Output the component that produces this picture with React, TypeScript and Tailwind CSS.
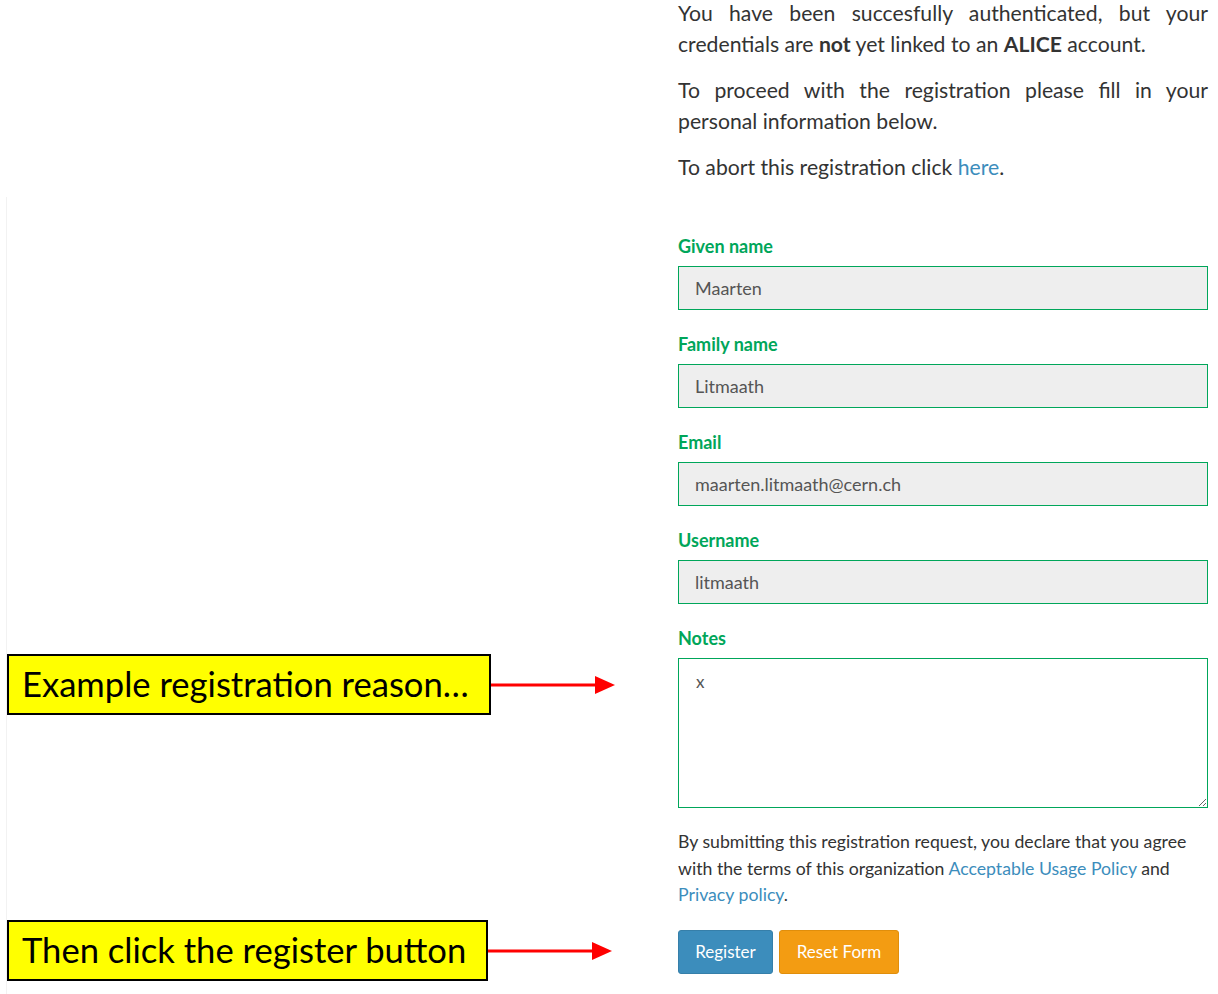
import React from "react";

const FIELDS = [
  { id: "given", label: "Given name", value: "Maarten" },
  { id: "family", label: "Family name", value: "Litmaath" },
  { id: "email", label: "Email", value: "maarten.litmaath@cern.ch" },
  { id: "username", label: "Username", value: "litmaath" },
];

function Arrow() {
  return (
    <svg width="126" height="22" viewBox="0 0 126 22" className="shrink-0">
      <line x1="0" y1="11" x2="106" y2="11" stroke="#ff0000" strokeWidth="3" />
      <polygon points="104,2 124,11 104,20" fill="#ff0000" />
    </svg>
  );
}

function Callout({ text, top, width }: { text: string; top: string; width: string }) {
  return (
    <div className={`absolute left-[7px] flex items-center ${top}`}>
      <div
        className={`h-[61px] ${width} bg-[#ffff00] border-2 border-black flex items-center pl-[13px] text-[34.6px] text-black font-['Lato',sans-serif] leading-none whitespace-nowrap`}
      >
        {text}
      </div>
      <Arrow />
    </div>
  );
}

export default function App() {
  return (
    <div className="relative h-[994px] w-[1218px] overflow-hidden bg-white font-['Lato','Open_Sans',sans-serif] text-[#333]">
      {/* faint page edge */}
      <div className="absolute left-[6px] top-[197px] bottom-0 w-px bg-[#f2f2f2]" />

      <div className="ml-[678px] w-[530px] -mt-[2px]">
        <p className="text-[21.2px] leading-[31px] text-justify mb-[15px]">
          You have been succesfully authenticated, but your credentials are{" "}
          <b>not</b> yet linked to an <b>ALICE</b> account.
        </p>
        <p className="text-[21.2px] leading-[31px] text-justify mb-[15px]">
          To proceed with the registration please fill in your personal information below.
        </p>
        <p className="text-[21.2px] leading-[31px]">
          To abort this registration click <a className="text-[#3c8dbc]">here</a>.
        </p>

        <form className="mt-[51px]">
          {FIELDS.map((f) => (
            <div key={f.id} className="mb-[22px]">
              <label className="block text-[18px] leading-[24px] font-bold text-[#00a65a] mb-[8px]">
                {f.label}
              </label>
              <input
                readOnly
                value={f.value}
                className="block w-full h-[44px] bg-[#eeeeee] border-[1.5px] border-[#00a65a] px-[16px] text-[18px] text-[#555] outline-none"
              />
            </div>
          ))}

          <div>
            <label className="block text-[18px] leading-[24px] font-bold text-[#00a65a] mb-[8px]">
              Notes
            </label>
            <textarea
              readOnly
              defaultValue="x"
              className="block w-full h-[150px] bg-white border-[1.5px] border-[#00a65a] px-[17px] py-[10px] text-[17px] text-[#555] outline-none"
            />
          </div>

          <p className="mt-[21px] text-[17.7px] leading-[26.5px] text-[#333]">
            By submitting this registration request, you declare that you agree with the terms of
            this organization <a className="text-[#3c8dbc]">Acceptable Usage Policy</a> and{" "}
            <a className="text-[#3c8dbc]">Privacy policy</a>.
          </p>

          <div className="mt-[21px] flex gap-[6px]">
            <button
              type="button"
              className="h-[44px] w-[95px] rounded-[3px] bg-[#3c8dbc] border border-[#367fa9] text-white text-[17px]"
            >
              Register
            </button>
            <button
              type="button"
              className="h-[44px] w-[120px] rounded-[3px] bg-[#f39c12] border border-[#e08e0b] text-white text-[17px]"
            >
              Reset Form
            </button>
          </div>
        </form>
      </div>

      <Callout text="Example registration reason…" top="top-[654px]" width="w-[484px]" />
      <Callout text="Then click the register button" top="top-[920px]" width="w-[481px]" />
    </div>
  );
}
